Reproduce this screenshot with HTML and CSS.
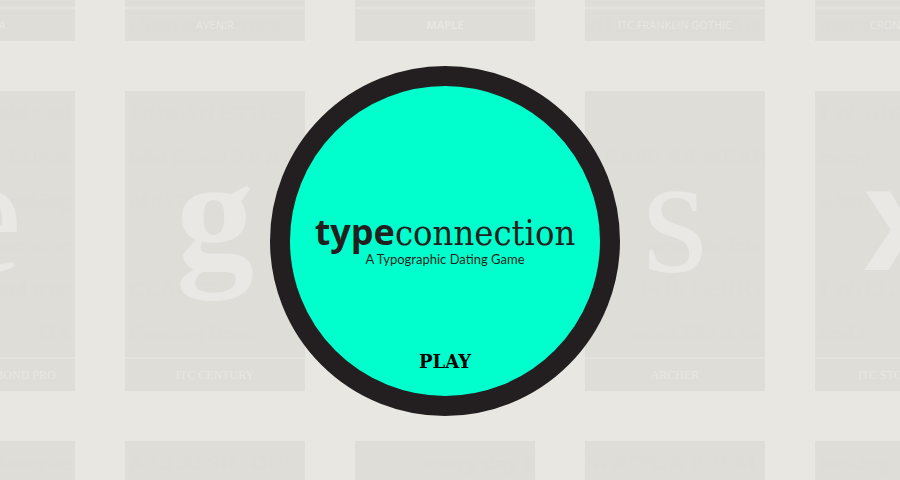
FILE: index.html
```html
<!DOCTYPE html>
<html lang="en">
<head>
  <meta charset="UTF-8">
  <meta name="viewport" content="width=device-width, initial-scale=1.0">
  <title>Type Connection</title>
  <link rel="stylesheet" href="styles.css">
</head>
<body>
  <main class="stage">
    <!-- wall of typeface cards -->
    <div class="wall">
      <div class="card"><div class="name sans">FUTURA</div></div>
      <div class="card"><div class="bio end"><i>clean and serene</i></div><div class="name sans">AVENIR</div></div>
      <div class="card"><div class="name sans bold">MAPLE</div></div>
      <div class="card"><div class="bio end">ALL AMERICAN</div><div class="name sans">ITC FRANKLIN GOTHIC</div></div>
      <div class="card"><div class="bio end">more serious</div><div class="name sans">CRONOS PRO</div></div>

      <div class="card"><div class="bio right">old soul<br>MY BUNK<br>seeking<br><i>an edge</i><br>and true<br>HA</div><div class="letter">e</div><div class="name">ADOBE GARAMOND PRO</div></div>
      <div class="card"><div class="bio">I AM AN ETHE<br><i>who found it a n</i><br>MAGA<br><br>CLARITY<br>Coming from</div><div class="letter small bold">g</div><div class="name">ITC CENTURY</div></div>
      <div class="card"></div>
      <div class="card"><div class="bio right"><br>LEASE BE MEAN<br><br><i>never be late</i><br>FOR SERIO<br>must like a ke</div><div class="letter">s</div><div class="name">ARCHER</div></div>
      <div class="card"><div class="bio">I WORK<br><i>many</i><br>when<br><br>I WILL<br><i>and t</i></div><div class="letter smaller sans bold">x</div><div class="name">ITC STONE SANS</div></div>

      <div class="card"><div class="bio right">favorite</div></div>
      <div class="card"><div class="bio">A CLASSIC ONE</div></div>
      <div class="card"><div class="bio right">every day I</div></div>
      <div class="card"><div class="bio">WRITE A POEM</div></div>
      <div class="card"><div class="bio">looking</div></div>
    </div>

    <section class="circle">
      <h1 class="logo"><span class="logo-type">type</span><span class="logo-connection">connection</span></h1>
      <p class="tagline">A Typographic Dating Game</p>
      <a class="play" href="#play">PLAY</a>
    </section>
  </main>
</body>
</html>
```

FILE: styles.css
```css
* {
  box-sizing: border-box;
}
body {
  margin: 0;
  background: #e8e7e2;
  font-family: "Liberation Serif", serif;
  color: #231f20;
}
.stage {
  display: grid;
  place-content: center;
  place-items: center;
  height: 100vh;
  padding: 2px 10px 0 0;
  overflow: hidden;
}
.wall,
.circle {
  grid-area: 1 / 1;
}

/* cards */
.wall {
  display: grid;
  grid-template-columns: repeat(5, 180px);
  gap: 50px;
}
.card {
  display: grid;
  grid-template-columns: minmax(0, 1fr);
  grid-template-rows: 266px 34px;
  height: 300px;
  background: #deddd8;
  overflow: hidden;
}
.bio {
  grid-area: 1 / 1;
  padding: 0 4px;
  font-size: 22px;
  font-weight: bold;
  line-height: 44px;
  white-space: nowrap;
  color: #dddcd7;
}
.right {
  text-align: right;
}
.end {
  grid-area: 1 / 1 / 3 / 2;
  align-self: end;
  line-height: 32px;
}
.letter {
  grid-area: 1 / 1;
  font-size: 170px;
  line-height: 246px;
  text-align: center;
  color: #e9e8e4;
}
.small {
  font-size: 156px;
}
.smaller {
  font-size: 144px;
}
.name {
  grid-area: 2 / 1;
  border-top: 2px solid #e3e2dd;
  font-size: 12px;
  line-height: 32px;
  text-align: center;
  color: #e8e7e2;
}
.name.sans {
  font-size: 11px;
}
.sans {
  font-family: "Open Sans", sans-serif;
}
.bold {
  font-weight: bold;
}

/* start circle */
.circle {
  z-index: 1;
  display: flex;
  flex-direction: column;
  align-items: center;
  width: 350px;
  height: 350px;
  padding: 128px 0 24px;
  border: 20px solid #231f20;
  border-radius: 50%;
  background: #00ffcc;
}
.logo {
  margin: 0;
  font-size: 36px;
  line-height: 36px;
  font-weight: normal;
  white-space: nowrap;
}
.logo-type {
  font-family: "Open Sans", sans-serif;
  font-weight: 700;
}
.logo-connection {
  font-family: "DejaVu Serif Condensed", "DejaVu Serif", serif;
  font-stretch: condensed;
}
.tagline {
  margin: 0;
  font-family: Lato, sans-serif;
  font-size: 13px;
  line-height: 16px;
}
.play {
  margin-top: auto;
  font-family: "DejaVu Serif", serif;
  font-size: 18px;
  line-height: 20px;
  font-weight: bold;
  color: #000;
  text-decoration: none;
}
```
